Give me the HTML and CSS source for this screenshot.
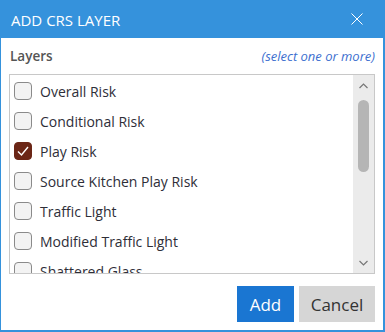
FILE: index.html
```html
<html lang="en">

<head>
    <meta charset="UTF-8">
    <meta name="viewport" content="width=device-width, initial-scale=1.0">
    <title>Add CRS Layer</title>
    <link rel="stylesheet" href="styles.css">
</head>

<body>
    <div class="dialog">
        <div class="head">
            <span class="title">ADD CRS LAYER</span>
            <svg class="close" width="12" height="12" viewBox="0 0 12 12">
                <path d="M0.5 0.5 L11.5 11.5 M11.5 0.5 L0.5 11.5" stroke="#fff" stroke-width="1" fill="none" />
            </svg>
        </div>

        <div class="main">
            <div class="labelrow">
                <span class="lbl">Layers</span>
                <span class="hint">(select one or more)</span>
            </div>

            <div class="listbox">
                <div class="items">
                    <div class="item"><span class="box"></span>Overall Risk</div>
                    <div class="item"><span class="box"></span>Conditional Risk</div>
                    <div class="item"><span class="box checked">
                        <svg width="14" height="14" viewBox="0 0 14 14">
                            <path d="M2 7.5 L5.5 11 L12 3" stroke="#fff" stroke-width="1.4" fill="none" />
                        </svg>
                    </span>Play Risk</div>
                    <div class="item"><span class="box"></span>Source Kitchen Play Risk</div>
                    <div class="item"><span class="box"></span>Traffic Light</div>
                    <div class="item"><span class="box"></span>Modified Traffic Light</div>
                    <div class="item"><span class="box"></span>Shattered Glass</div>
                </div>
                <div class="scroll">
                    <svg class="arrow" width="9" height="6" viewBox="0 0 9 6">
                        <path d="M0.5 5 L4.5 1 L8.5 5" stroke="#777" stroke-width="1.2" fill="none" />
                    </svg>
                    <div class="track">
                        <div class="thumb"></div>
                    </div>
                    <svg class="arrow" width="9" height="6" viewBox="0 0 9 6">
                        <path d="M0.5 1 L4.5 5 L8.5 1" stroke="#777" stroke-width="1.2" fill="none" />
                    </svg>
                </div>
            </div>
        </div>

        <div class="foot">
            <button class="btn add">Add</button>
            <button class="btn cancel">Cancel</button>
        </div>
    </div>
</body>

</html>
```

FILE: styles.css
```css
body {
    margin: 0;
    font-family: "Open Sans", "Noto Sans", sans-serif;
}

.dialog {
    width: 385px;
    height: 332px;
    box-sizing: border-box;
    border: 2px solid #3592dc;
    border-top: 0;
    border-left-width: 1px;
    background-color: #fff;
    display: flex;
    flex-direction: column;
}

.head {
    height: 38px;
    background-color: #3592dc;
    display: flex;
    align-items: center;
    justify-content: space-between;
    padding: 0 22px 0 11px;
    margin: 0 -2px 0 -1px;
}

.title {
    color: #fff;
    font-size: 15px;
    padding-top: 1px;
}

.main {
    padding: 0 8px 0 8px;
}

.labelrow {
    height: 36px;
    display: flex;
    align-items: center;
    justify-content: space-between;
    padding: 0 0 0 1px;
}

.lbl {
    color: #555;
    font-size: 13.5px;
    font-weight: 600;
}

.hint {
    color: #3d6fcf;
    font-size: 13px;
    font-style: italic;
}

.listbox {
    height: 200px;
    box-sizing: border-box;
    border: 1px solid #c8c8c8;
    display: flex;
}

.items {
    flex: 1;
    overflow: hidden;
    padding-top: 1px;
}

.item {
    height: 30px;
    display: flex;
    align-items: center;
    padding-left: 4px;
    font-size: 14px;
    color: #2e2e38;
}

.box {
    width: 16px;
    height: 16px;
    border: 1px solid #8a8a8a;
    border-radius: 4px;
    background-color: #f3f3f3;
    margin-right: 8px;
    display: flex;
    align-items: center;
    justify-content: center;
}

.checked {
    background-color: #6b2616;
    border-color: #6b2616;
}

.scroll {
    width: 21px;
    background-color: #ebebeb;
    display: flex;
    flex-direction: column;
    align-items: center;
    padding: 8px 0 7px 0;
}

.track {
    flex: 1;
    width: 100%;
    display: flex;
    justify-content: center;
    padding-top: 11px;
}

.thumb {
    width: 11px;
    height: 72px;
    border-radius: 6px;
    background-color: #b5b5b5;
}

.foot {
    flex: 1;
    display: flex;
    justify-content: flex-end;
    align-items: flex-end;
    gap: 5px;
    padding: 0 8px 8px 0;
}

.btn {
    height: 36px;
    border: 0;
    font-family: "Open Sans", "Noto Sans", sans-serif;
    font-size: 17px;
    padding: 0;
}

.add {
    width: 57px;
    background-color: #1a76d2;
    color: #fff;
}

.cancel {
    width: 76px;
    background-color: #d6d6d6;
    color: #333;
}
```
